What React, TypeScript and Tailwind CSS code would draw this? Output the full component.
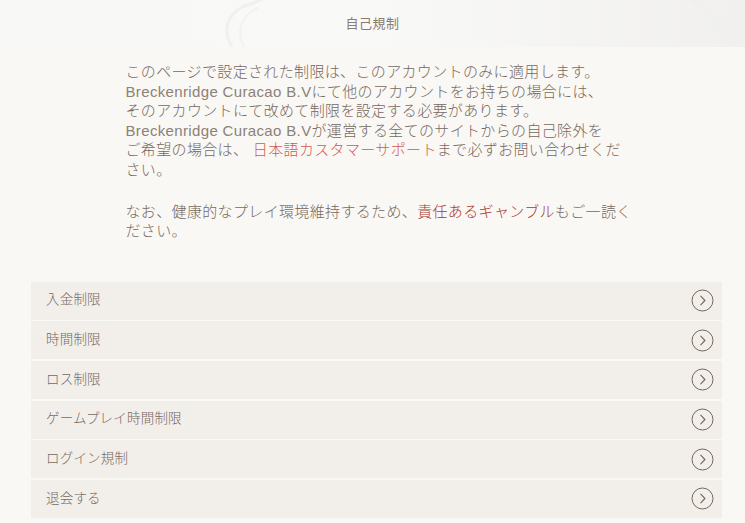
import React from "react";

const items = [
  "入金制限",
  "時間制限",
  "ロス制限",
  "ゲームプレイ時間制限",
  "ログイン規制",
  "退会する",
];

function CircleChevron() {
  return (
    <svg width="23" height="23" viewBox="0 0 23 23" fill="none" className="shrink-0">
      <circle cx="11.5" cy="11.5" r="10.5" stroke="#74675c" strokeWidth="1" />
      <path d="M9.8 7.2 L13.9 11.5 L9.8 15.8" stroke="#74675c" strokeWidth="1.1" strokeLinecap="round" strokeLinejoin="round" />
    </svg>
  );
}

function Latin({ children }: { children: React.ReactNode }) {
  return <span className="text-[#8c8177]">{children}</span>;
}

export default function App() {
  return (
    <div
      className="min-h-[523px] w-full bg-[#faf8f5] text-[#7a6e64]"
      style={{ fontFamily: '"Liberation Sans", "Noto Sans CJK JP", sans-serif' }}
    >
      <header className="relative h-[47px] overflow-hidden bg-gradient-to-r from-[#f8f8f7] via-[#f9f9f8] to-[#f1f0ef] flex items-center justify-center">
        <svg className="absolute inset-0 h-full w-full" viewBox="0 0 745 47" preserveAspectRatio="none" fill="none">
          <path d="M232 47 C222 30 226 12 250 4 C262 0 270 -4 262 -10" stroke="#f0f0ef" strokeWidth="3" />
          <path d="M244 47 C236 32 240 16 258 8" stroke="#f2f2f1" strokeWidth="2" />
          <path d="M690 0 C708 10 724 22 726 47" stroke="#f0f0ef" strokeWidth="6" />
        </svg>
        <h1 className="relative text-[13px] text-[#8b7b6e] tracking-[0.5px]">自己規制</h1>
      </header>

      <main className="pt-[15px] pb-[8px]">
        <div className="mx-auto w-[494px] whitespace-nowrap text-[15px] leading-[19.5px] tracking-[0.35px] font-light text-[#76695f]">
          <p>
            このページで設定された制限は、このアカウントのみに適用します。
            <br />
            <Latin>Breckenridge Curacao B.V</Latin>にて他のアカウントをお持ちの場合には、
            <br />
            そのアカウントにて改めて制限を設定する必要があります。
            <br />
            <Latin>Breckenridge Curacao B.V</Latin>が運営する全てのサイトからの自己除外を
            <br />
            ご希望の場合は、 <span className="text-[#d25a4d]">日本語カスタマーサポート</span>まで必ずお問い合わせくだ
            <br />
            さい。
          </p>
          <p className="mt-[22.5px]">
            なお、健康的なプレイ環境維持するため、<span className="text-[#a9392f]">責任あるギャンブル</span>もご一読く
            <br />
            ださい。
          </p>
        </div>

        <ul className="ml-[31px] mr-[23px] mt-[41px] flex flex-col gap-[1.7px]">
          {items.map((label) => (
            <li
              key={label}
              className="flex h-[38px] items-center justify-between bg-[#f2efeb] pl-[15px] pr-[8px]"
            >
              <span className="text-[13.5px] tracking-[0.2px] font-light text-[#76695f]">{label}</span>
              <CircleChevron />
            </li>
          ))}
        </ul>
      </main>
    </div>
  );
}
